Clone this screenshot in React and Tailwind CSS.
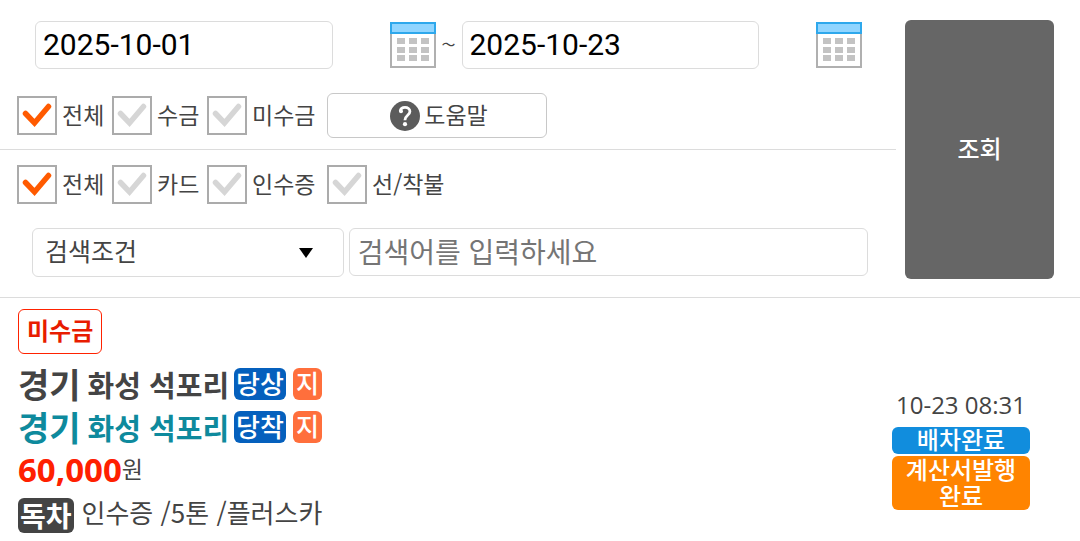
import React, { useState } from 'react';

const CalendarIcon = () => (
  <svg width="46" height="46" viewBox="0 0 46 46" aria-hidden="true">
    <rect x="1" y="11" width="44" height="34" fill="#fff" stroke="#b0b0b0" strokeWidth="2" />
    <rect x="1" y="1" width="44" height="10" fill="#90d5ff" stroke="#2ea8ec" strokeWidth="2" />
    {[16, 25, 33].map((y) =>
      [7, 19, 31].map((x) => (
        <rect key={`${x}-${y}`} x={x} y={y} width="8" height="6" fill="#c3c3c3" />
      ))
    )}
  </svg>
);

const HelpIcon = () => (
  <svg width="30" height="30" viewBox="0 0 30 30" fill="none" aria-hidden="true">
    <circle cx="15" cy="15" r="15" fill="#5c5c5c" />
    <path d="M10.2 10.2C10.6 7.6 12.4 6.4 15 6.4c2.8 0 4.9 1.7 4.9 4.1 0 3.9-5 3.7-5 8.7" stroke="#fff" strokeWidth="2.8" />
    <circle cx="11" cy="10.2" r="2" fill="#fff" />
    <circle cx="15" cy="23.2" r="2.1" fill="#fff" />
  </svg>
);

const DateField = ({ label, value, onChange }) => (
  <>
    <input
      type="text"
      aria-label={label}
      value={value}
      onChange={(e) => onChange(e.target.value)}
      className="mr-[57px] h-12 min-w-0 flex-1 rounded-md border border-[#dcdcdc] bg-white px-[7px] pb-0.5 font-[Roboto,sans-serif] text-[30px] text-black"
    />
    <button type="button" aria-label={`${label} 선택`} className="shrink-0">
      <CalendarIcon />
    </button>
  </>
);

const CheckOption = ({ label, defaultChecked }) => (
  <label className="flex items-center gap-[5px] whitespace-nowrap text-[23px] leading-9">
    <span className="relative h-[39px] w-10 shrink-0">
      <input
        type="checkbox"
        defaultChecked={defaultChecked}
        className="peer block h-[39px] w-10 appearance-none border-2 border-[#ababab] bg-white"
      />
      <svg
        viewBox="0 0 40 39"
        fill="none"
        className="pointer-events-none absolute inset-0 text-[#d6d6d6] peer-checked:text-[#ff5a00]"
      >
        <path
          d="M8.5 17.5l9 9.5 14-16.5"
          stroke="currentColor"
          strokeWidth="5.5"
          strokeLinecap="round"
        />
      </svg>
    </span>
    <span className="pb-[3px]">{label}</span>
  </label>
);

const Route = ({ region, place, tag, color }) => (
  <div className={`flex h-[43px] items-center whitespace-nowrap font-bold ${color}`}>
    <span className="mr-[7px] text-[34px] leading-10">{region}</span>
    <span className="mr-[5px] text-[29px] leading-10">{place}</span>
    <span className="mr-[7px] rounded-md bg-[#0560bd] px-0.5 pb-0.5 text-[26px] font-medium leading-[30px] text-white">
      {tag}
    </span>
    <span className="rounded-md bg-[#ff6f3c] px-[3px] pb-1 text-[25px] font-medium leading-7 text-white">지</span>
  </div>
);

const App = () => {
  const [startDate, setStartDate] = useState('2025-10-01');
  const [endDate, setEndDate] = useState('2025-10-23');

  return (
    <div
      lang="ko"
      className="bg-white font-['Noto_Sans_CJK_KR',sans-serif] text-[#444]"
    >
      {/* Search form */}
      <form onSubmit={(e) => e.preventDefault()} className="flex border-b border-[#dcdcdc] pb-[18px] pr-[26px] pt-5">
        <div className="min-w-0 flex-1">
          <div className="flex h-[50px] items-center pl-[35px] pr-[34px]">
            <DateField label="시작일" value={startDate} onChange={setStartDate} />
            <span className="w-[26px] shrink-0 pb-1 text-center text-[28px] font-light">~</span>
            <DateField label="종료일" value={endDate} onChange={setEndDate} />
          </div>

          <div className="grid grid-cols-[95px_95px_120px_220px] items-center border-b border-[#dcdcdc] pb-[11px] pl-[17px] pt-[23px]">
            <CheckOption label="전체" defaultChecked />
            <CheckOption label="수금" />
            <CheckOption label="미수금" />
            <button
              type="button"
              className="flex h-[45px] items-center justify-center gap-1 rounded-md border border-[#c8c8c8] pl-1 text-[23px]"
            >
              <HelpIcon />
              <span className="pb-[3px]">도움말</span>
            </button>
          </div>

          <div className="grid grid-cols-[95px_95px_120px_220px] items-center pl-[17px] pt-[15px]">
            <CheckOption label="전체" defaultChecked />
            <CheckOption label="카드" />
            <CheckOption label="인수증" />
            <CheckOption label="선/착불" />
          </div>

          <div className="grid grid-cols-[3fr_5fr] gap-[5px] pl-8 pr-7 pt-6">
            <div className="relative">
              <select
                aria-label="검색조건"
                className="block h-[49px] w-full appearance-none rounded-md border border-[#dcdcdc] bg-white px-3 pb-[3px] text-[25px]"
              >
                <option>검색조건</option>
              </select>
              <svg
                width="14"
                height="10"
                viewBox="0 0 14 10"
                className="pointer-events-none absolute right-[31px] top-5"
              >
                <path d="M0 0h14L7 10z" fill="#000" />
              </svg>
            </div>
            <input
              type="text"
              aria-label="검색어"
              placeholder="검색어를 입력하세요"
              className="h-12 min-w-0 rounded-md border border-[#dcdcdc] px-2 pb-[3px] text-[28px] placeholder:text-[#757575]"
            />
          </div>
        </div>

        <button
          type="submit"
          className="ml-[9px] h-[259px] w-[149px] shrink-0 rounded-md bg-[#666] pb-1 text-2xl font-medium text-white"
        >
          조회
        </button>
      </form>

      {/* Order item */}
      <div className="flex items-start justify-between pl-[18px] pr-[50px] pt-[11px]">
        <div>
          <span className="mb-2 inline-block h-[45px] rounded-md border border-[#ff2200] px-2 text-2xl font-bold leading-10 text-[#e81c00]">
            미수금
          </span>
          <Route region="경기" place="화성 석포리" tag="당상" color="text-[#444]" />
          <Route region="경기" place="화성 석포리" tag="당착" color="text-[#0e8a9d]" />
          <div className="flex h-[43px] items-center">
            <strong className="font-['Open_Sans',sans-serif] text-[33px] text-[#ff2000]">60,000</strong>
            <span className="pb-0.5 text-[23px]">원</span>
          </div>
          <div className="flex h-[49px] items-center gap-2 whitespace-nowrap text-[26px]">
            <span className="rounded-md bg-[#444] px-0.5 text-[28px] font-bold leading-[35px] text-white">독차</span>
            <span className="pb-2">인수증 /5톤 /플러스카</span>
          </div>
        </div>

        <div className="w-[138px] pt-[78px] text-center text-2xl text-white">
          <p className="mb-1 whitespace-nowrap font-['Open_Sans',sans-serif] text-2xl leading-9 text-[#444]">10-23 08:31</p>
          <p className="mb-0.5 rounded-md bg-[#118ddd] pb-[3px] font-medium leading-6">배차완료</p>
          <p className="rounded-md bg-[#ff8400] pb-0.5 font-medium leading-[26px]">
            계산서발행
            <br />
            완료
          </p>
        </div>
      </div>
    </div>
  );
};

export default App;
